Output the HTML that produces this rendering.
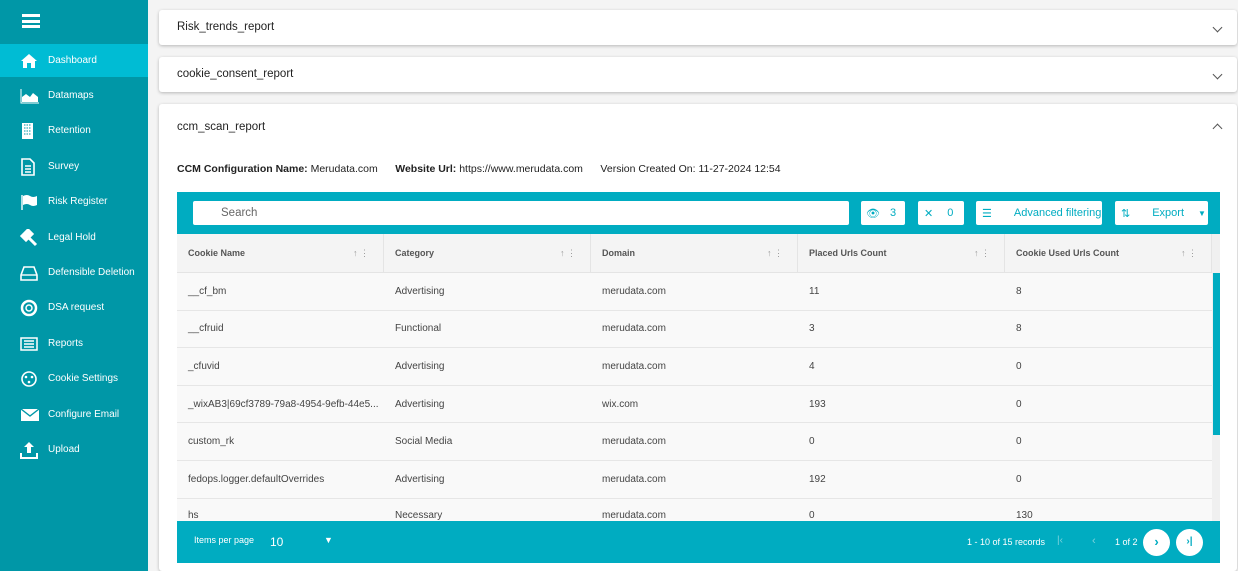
<!DOCTYPE html><html><head><style>
*{box-sizing:border-box;margin:0;padding:0}
html,body{width:1238px;height:571px;overflow:hidden}
body{background:#f4f4f4;font-family:"Liberation Sans",Roboto,sans-serif;position:relative;font-size:11px;color:#333}
.sb{position:absolute;left:0;top:0;width:148px;height:571px;background:#0097a7;color:#fff}
.sb .it{position:absolute;left:0;width:148px;height:33px;display:flex;align-items:center;font-size:10px}
.sb .it.a{background:#00bcd4}
.sb .it svg{position:absolute;left:20px}
.sb .it span{position:absolute;left:48px}
.pn{position:absolute;left:159px;width:1078px;background:#fff;box-shadow:0 1px 3px rgba(0,0,0,.25);border-radius:3px}
.pn .t{position:absolute;left:18px;font-size:11.5px;color:#222}
.chev{position:absolute;right:16px;width:7px;height:7px;border-right:1.3px solid #555;border-bottom:1.3px solid #555}
.tb{position:absolute;left:177px;top:192px;width:1043px;height:42px;background:#00acc1}
.btn{position:absolute;top:9px;height:24px;background:#fff;border-radius:2px;color:#00acc1;font-size:11px;display:flex;align-items:center}
.hd,.row{position:absolute;left:177px;width:1035px;display:flex}
.hd{top:234px;height:39px;background:#f4f4f4;border-bottom:1px solid #e4e4e4;font-size:9px;font-weight:bold;color:#555}
.hd div{width:207px;border-right:1px solid #e4e4e4;padding-left:11px;display:flex;align-items:center;position:relative}
.hd div:after{content:"↑ ⋮";position:absolute;right:14px;color:#999;font-weight:normal}
.row{height:37.6px;border-bottom:1px solid #e6e6e6;background:#f9f9f9;font-size:10px;color:#444}
.row div{width:207px;padding-left:11px;display:flex;align-items:center}
.ft{position:absolute;left:177px;top:521px;width:1043px;height:42px;background:#00acc1;color:#fff}
</style></head><body>
<div class="sb">
<div style="position:absolute;left:22px;top:14px;width:18px;height:14px;border-top:3px solid #fff;border-bottom:3px solid #fff"><div style="margin-top:2.5px;height:3px;background:#fff"></div></div>
<div class="it a" style="top:44px"><svg width="18" height="16" viewBox="0 0 18 16"><path d="M9 1L1 8h2v7h4v-5h4v5h4V8h2z" fill="#fff"/></svg><span>Dashboard</span></div>
<div class="it" style="top:79px"><svg width="20" height="16"><path d="M1 1v14h18" stroke="#fff" fill="none"/><path d="M2 14V9l4-3 4 3 3-4 5 4v5z" fill="#fff"/></svg><span>Datamaps</span></div>
<div class="it" style="top:114px"><svg width="16" height="18"><rect x="2" y="1" width="11" height="16" fill="#fff"/><path d="M4 3h7M4 6h7M4 9h7M4 12h7" stroke="#0097a7" stroke-dasharray="1.5 1"/></svg><span>Retention</span></div>
<div class="it" style="top:150px"><svg width="16" height="18"><path d="M2 1h8l4 4v12H2z" fill="none" stroke="#fff" stroke-width="1.6"/><path d="M5 8h6M5 11h6M5 14h6" stroke="#fff" stroke-width="1.4"/></svg><span>Survey</span></div>
<div class="it" style="top:185px"><svg width="18" height="16"><path d="M2 1v15" stroke="#fff" stroke-width="1.4"/><path d="M3 2q4-2 7 0t7 0v9q-4 2-7 0t-7 0z" fill="#fff"/></svg><span>Risk Register</span></div>
<div class="it" style="top:221px"><svg width="18" height="18"><path d="M2 7l6-6 4 4-6 6zM9 9l7 7" stroke="#fff" stroke-width="3" fill="#fff"/></svg><span>Legal Hold</span></div>
<div class="it" style="top:256px"><svg width="18" height="16"><path d="M4 2h10l3 8v5H1v-5z" fill="none" stroke="#fff" stroke-width="1.6"/><path d="M1 10h16" stroke="#fff" stroke-width="1.4"/></svg><span>Defensible Deletion</span></div>
<div class="it" style="top:291px"><svg width="18" height="18"><circle cx="9" cy="9" r="7" fill="none" stroke="#fff" stroke-width="2.5"/><circle cx="9" cy="9" r="3" fill="none" stroke="#fff" stroke-width="1.5"/></svg><span>DSA request</span></div>
<div class="it" style="top:327px"><svg width="18" height="16"><rect x="1" y="2" width="16" height="12" fill="none" stroke="#fff" stroke-width="1.5"/><path d="M4 5h10M4 8h10M4 11h10" stroke="#fff" stroke-width="1.5"/></svg><span>Reports</span></div>
<div class="it" style="top:362px"><svg width="18" height="18"><circle cx="9" cy="9" r="7" fill="none" stroke="#fff" stroke-width="1.6"/><circle cx="6" cy="7" r="1.3" fill="#fff"/><circle cx="12" cy="7" r="1.3" fill="#fff"/><circle cx="9" cy="12" r="1.3" fill="#fff"/></svg><span>Cookie Settings</span></div>
<div class="it" style="top:398px"><svg width="20" height="16"><path d="M1 2h18v12H1z" fill="#fff"/><path d="M1 2l9 7 9-7" stroke="#0097a7" stroke-width="1.4" fill="none"/></svg><span>Configure Email</span></div>
<div class="it" style="top:433px"><svg width="18" height="18"><path d="M9 1l-5 5h3v6h4V6h3z" fill="#fff"/><path d="M1 12v5h16v-5" fill="none" stroke="#fff" stroke-width="2"/></svg><span>Upload</span></div>
</div>
<div class="pn" style="top:10px;height:35px"><span class="t" style="top:11px">Risk_trends_report</span><span class="chev" style="top:14px;transform:rotate(45deg)"></span></div>
<div class="pn" style="top:57px;height:35px"><span class="t" style="top:11px">cookie_consent_report</span><span class="chev" style="top:14px;transform:rotate(45deg)"></span></div>
<div class="pn" style="top:104px;height:467px"><span class="t" style="top:17px">ccm_scan_report</span><span class="chev" style="top:21px;transform:rotate(225deg)"></span>
<div style="position:absolute;left:18px;top:59px;font-size:10.5px;color:#222"><b>CCM Configuration Name:</b> Merudata.com &nbsp;&nbsp;&nbsp;&nbsp; <b>Website Url:</b> https://www.merudata.com &nbsp;&nbsp;&nbsp;&nbsp; Version Created On: 11-27-2024 12:54</div></div>
<div class="tb">
<div style="position:absolute;left:16px;top:9px;width:656px;height:24px;background:#fff;border-radius:2px;padding:6px 0 0 28px;font-size:11.5px;color:#666">Search</div>
<div class="btn" style="left:684px;width:44px"><span style="margin-left:5px;font-size:11px">👁</span><span style="margin-left:10px">3</span></div>
<div class="btn" style="left:741px;width:46px"><span style="margin-left:6px">✕</span><span style="margin-left:14px">0</span></div>
<div class="btn" style="left:799px;width:126px"><span style="margin-left:6px">☰</span><span style="margin-left:22px">Advanced filtering</span></div>
<div class="btn" style="left:938px;width:93px"><span style="margin-left:6px">⇅</span><span style="margin-left:22px">Export</span><span style="margin-left:14px;font-size:8px">▼</span></div>
</div>
<div class="hd"><div>Cookie Name</div><div>Category</div><div>Domain</div><div>Placed Urls Count</div><div>Cookie Used Urls Count</div></div>
<div class="row" style="top:273px"><div>__cf_bm</div><div>Advertising</div><div>merudata.com</div><div>11</div><div>8</div></div>
<div class="row" style="top:310.6px"><div>__cfruid</div><div>Functional</div><div>merudata.com</div><div>3</div><div>8</div></div>
<div class="row" style="top:348.2px"><div>_cfuvid</div><div>Advertising</div><div>merudata.com</div><div>4</div><div>0</div></div>
<div class="row" style="top:385.8px"><div>_wixAB3|69cf3789-79a8-4954-9efb-44e5...</div><div>Advertising</div><div>wix.com</div><div>193</div><div>0</div></div>
<div class="row" style="top:423.4px"><div>custom_rk</div><div>Social Media</div><div>merudata.com</div><div>0</div><div>0</div></div>
<div class="row" style="top:461px"><div>fedops.logger.defaultOverrides</div><div>Advertising</div><div>merudata.com</div><div>192</div><div>0</div></div>
<div class="row" style="top:498.6px;height:22.4px;overflow:hidden;border:none"><div style="align-items:flex-end">hs</div><div style="align-items:flex-end">Necessary</div><div style="align-items:flex-end">merudata.com</div><div style="align-items:flex-end">0</div><div style="align-items:flex-end">130</div></div>
<div style="position:absolute;left:1212px;top:234px;width:8px;height:287px;background:#f0f0f0"></div>
<div style="position:absolute;left:1213px;top:273px;width:7px;height:162px;background:#00acc1"></div>
<div class="ft">
<span style="position:absolute;left:17px;top:14px;font-size:9px">Items per page</span>
<span style="position:absolute;left:93px;top:14px;font-size:12px">10</span>
<span style="position:absolute;left:147px;top:14px;font-size:9px">▼</span>
<span style="position:absolute;left:790px;top:16px;font-size:9px">1 - 10 of 15 records</span>
<span style="position:absolute;left:880px;top:14px;font-size:10px;color:#7fd3dd">|‹</span>
<span style="position:absolute;left:915px;top:14px;font-size:11px;color:#7fd3dd">‹</span>
<span style="position:absolute;left:938px;top:16px;font-size:9px">1 of 2</span>
<div style="position:absolute;left:966px;top:8px;width:27px;height:27px;border-radius:50%;background:#fff;color:#00acc1;text-align:center;line-height:26px;font-size:13px;font-weight:bold">›</div>
<div style="position:absolute;left:999px;top:8px;width:27px;height:27px;border-radius:50%;background:#fff;color:#00acc1;text-align:center;line-height:26px;font-size:10px;font-weight:bold">›|</div>
</div>
</body></html>
